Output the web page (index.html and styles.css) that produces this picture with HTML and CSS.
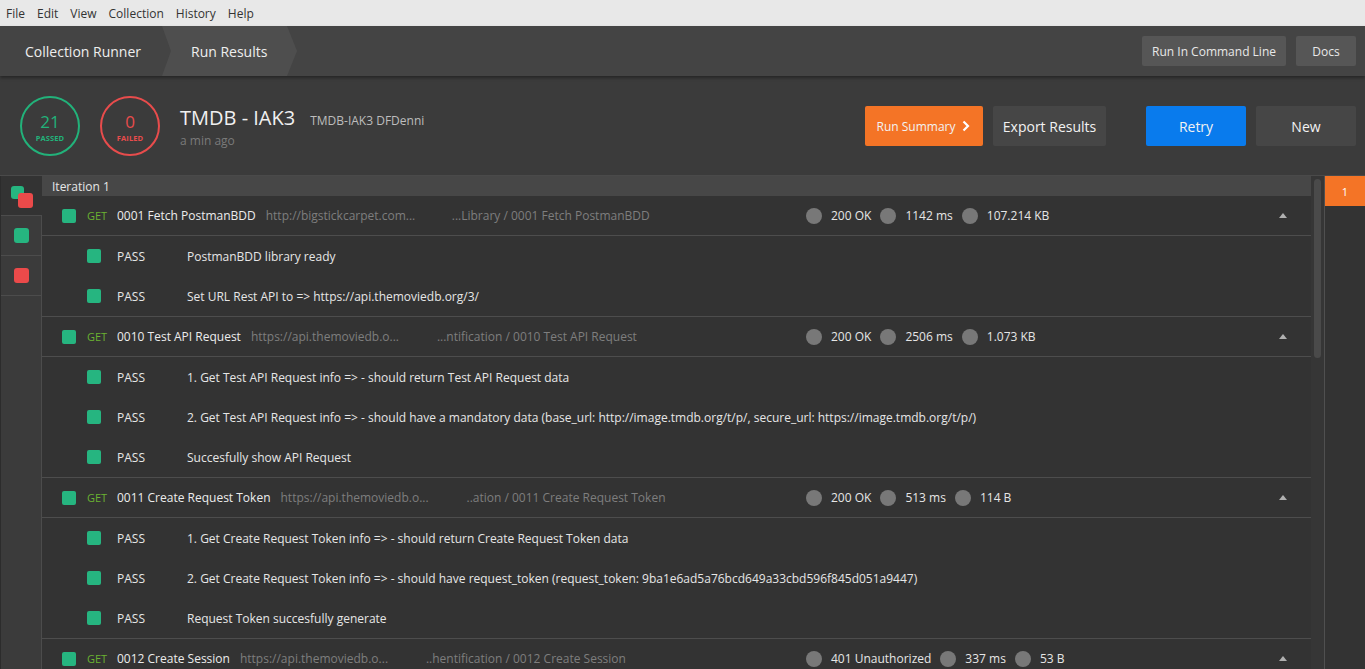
FILE: index.html
```html
<!DOCTYPE html>
<html>
<head>
<meta charset="utf-8">
<link rel="stylesheet" href="styles.css">
</head>
<body>
<div class="menubar">
  <span>File</span><span>Edit</span><span>View</span><span>Collection</span><span>History</span><span>Help</span>
</div>
<div class="tabbar">
  <div class="crumb crumb-first">Collection Runner</div>
  <div class="crumb crumb-active">Run Results</div>
  <div class="tab-actions">
    <button class="btn-dark">Run In Command Line</button>
    <button class="btn-dark btn-docs">Docs</button>
  </div>
</div>
<div class="header">
  <div class="ring ring-pass"><span class="ring-num">21</span><span class="ring-label">PASSED</span></div>
  <div class="ring ring-fail"><span class="ring-num">0</span><span class="ring-label">FAILED</span></div>
  <div class="title-block">
    <div class="title-line"><span class="title">TMDB - IAK3</span><span class="subtitle">TMDB-IAK3 DFDenni</span></div>
    <div class="ago">a min ago</div>
  </div>
  <div class="header-actions">
    <button class="btn btn-orange">Run Summary <svg width="10" height="12" viewBox="0 0 10 12"><path d="M2.5 1.5 L7 6 L2.5 10.5" fill="none" stroke="#fff" stroke-width="2.2"/></svg></button>
    <button class="btn btn-grey btn-export">Export Results</button>
    <button class="btn btn-blue">Retry</button>
    <button class="btn btn-grey btn-new">New</button>
  </div>
</div>
<div class="main">
  <div class="sidebar">
    <div class="stab stab-active"><span class="sq sq-g sq-back"></span><span class="sq sq-r sq-front"></span></div>
    <div class="stab"><span class="sq sq-g"></span></div>
    <div class="stab"><span class="sq sq-r"></span></div>
  </div>
  <div class="results">
    <div class="iter">Iteration 1</div>

    <div class="req">
      <div class="req-left"><span class="dot-sq"></span><span class="method">GET</span><span class="name">0001 Fetch PostmanBDD</span><span class="url">http://bigstickcarpet.com...</span><span class="path">...Library / 0001 Fetch PostmanBDD</span></div>
      <div class="stats"><span class="cdot"></span><span>200 OK</span><span class="cdot"></span><span>1142 ms</span><span class="cdot"></span><span>107.214 KB</span></div>
      <span class="caret"></span>
    </div>
    <div class="tests">
      <div class="test"><span class="dot-sq"></span><span class="pass">PASS</span><span>PostmanBDD library ready</span></div>
      <div class="test"><span class="dot-sq"></span><span class="pass">PASS</span><span>Set URL Rest API to =&gt; https://api.themoviedb.org/3/</span></div>
    </div>

    <div class="req">
      <div class="req-left"><span class="dot-sq"></span><span class="method">GET</span><span class="name">0010 Test API Request</span><span class="url">https://api.themoviedb.o...</span><span class="path">...ntification / 0010 Test API Request</span></div>
      <div class="stats"><span class="cdot"></span><span>200 OK</span><span class="cdot"></span><span>2506 ms</span><span class="cdot"></span><span>1.073 KB</span></div>
      <span class="caret"></span>
    </div>
    <div class="tests">
      <div class="test"><span class="dot-sq"></span><span class="pass">PASS</span><span>1. Get Test API Request info =&gt; - should return Test API Request data</span></div>
      <div class="test"><span class="dot-sq"></span><span class="pass">PASS</span><span>2. Get Test API Request info =&gt; - should have a mandatory data (base_url: http://image.tmdb.org/t/p/, secure_url: https://image.tmdb.org/t/p/)</span></div>
      <div class="test"><span class="dot-sq"></span><span class="pass">PASS</span><span>Succesfully show API Request</span></div>
    </div>

    <div class="req">
      <div class="req-left"><span class="dot-sq"></span><span class="method">GET</span><span class="name">0011 Create Request Token</span><span class="url">https://api.themoviedb.o...</span><span class="path">..ation / 0011 Create Request Token</span></div>
      <div class="stats"><span class="cdot"></span><span>200 OK</span><span class="cdot"></span><span>513 ms</span><span class="cdot"></span><span>114 B</span></div>
      <span class="caret"></span>
    </div>
    <div class="tests">
      <div class="test"><span class="dot-sq"></span><span class="pass">PASS</span><span>1. Get Create Request Token info =&gt; - should return Create Request Token data</span></div>
      <div class="test"><span class="dot-sq"></span><span class="pass">PASS</span><span>2. Get Create Request Token info =&gt; - should have request_token (request_token: 9ba1e6ad5a76bcd649a33cbd596f845d051a9447)</span></div>
      <div class="test"><span class="dot-sq"></span><span class="pass">PASS</span><span>Request Token succesfully generate</span></div>
    </div>

    <div class="req">
      <div class="req-left"><span class="dot-sq"></span><span class="method">GET</span><span class="name">0012 Create Session</span><span class="url">https://api.themoviedb.o...</span><span class="path">..hentification / 0012 Create Session</span></div>
      <div class="stats"><span class="cdot"></span><span>401 Unauthorized</span><span class="cdot"></span><span>337 ms</span><span class="cdot"></span><span>53 B</span></div>
      <span class="caret"></span>
    </div>
  </div>
  <div class="scroll"><div class="thumb"></div></div>
  <div class="iters">
    <div class="iter-num">1</div>
  </div>
</div>
</body>
</html>
```
FILE: styles.css
```css
html, body { margin: 0; padding: 0; }
body {
  width: 1365px;
  height: 669px;
  overflow: hidden;
  background: #333333;
  font-family: "Open Sans", "Noto Sans", sans-serif;
  color: #e6e6e6;
}
button { font-family: inherit; border: 0; cursor: pointer; }

.menubar {
  height: 26px;
  background: #e8e8e8;
  display: flex;
  align-items: center;
  padding-left: 6px;
  font-size: 12px;
  color: #333;
}
.menubar span { margin-right: 12px; }

.tabbar {
  height: 50px;
  background: #444444;
  display: flex;
  align-items: stretch;
  position: relative;
  box-shadow: 0 2px 3px rgba(0,0,0,0.35);
  z-index: 2;
}
.crumb {
  display: flex;
  align-items: center;
  font-size: 14px;
  color: #eeeeee;
}
.crumb-first { width: 137px; padding-left: 25px; }
.crumb-active {
  background: #4e4e4e;
  padding-left: 29px;
  width: 106px;
  clip-path: polygon(0 0, 125px 0, 135px 50%, 125px 100%, 0 100%, 9px 50%);
}
.tab-actions {
  margin-left: auto;
  display: flex;
  align-items: center;
  gap: 10px;
  padding-right: 9px;
}
.btn-dark {
  height: 30px;
  background: #565656;
  color: #e8e8e8;
  font-size: 12px;
  padding: 0 10px;
  border-radius: 2px;
}
.btn-docs { width: 60px; }

.header {
  height: 100px;
  background: #3b3b3b;
  display: flex;
  align-items: center;
  padding-left: 20px;
  box-sizing: border-box;
  border-bottom: 1px solid #4a4a4a;
}
.ring {
  width: 60px; height: 60px;
  box-sizing: border-box;
  border-radius: 50%;
  border: 2px solid;
  display: flex; flex-direction: column; align-items: center; justify-content: center;
  margin-right: 20px;
  margin-top: 1px;
}
.ring-pass { border-color: #22b27a; color: #22b27a; }
.ring-fail { border-color: #e84c4c; color: #e84c4c; }
.ring-num { font-size: 17px; line-height: 20px; margin-top: 2px; }
.ring-label { font-size: 7.5px; font-weight: 700; letter-spacing: 0.1px; margin-top: 1px; line-height: 10px; }
.title-block { margin-top: 1px; }
.title-line { display: flex; align-items: baseline; }
.title { font-size: 20px; color: #f0f0f0; }
.subtitle { font-size: 12px; color: #bdbdbd; margin-left: 15px; }
.ago { font-size: 12px; color: #7a7a7a; margin-top: 1px; }

.header-actions {
  margin-left: auto;
  display: flex;
  align-items: center;
  padding-right: 9px;
  margin-top: 1px;
}
.btn {
  height: 40px;
  border-radius: 2px;
  color: #f2f2f2;
  display: flex; align-items: center; justify-content: center;
}
.btn-orange {
  width: 118px;
  background: #f47426;
  font-size: 12px;
  gap: 6px;
  margin-right: 10px;
  padding-top: 1px;
}
.btn-grey { background: #464646; font-size: 14px; }
.btn-export { width: 113px; margin-right: 40px; }
.btn-blue { width: 100px; background: #097bed; font-size: 14px; margin-right: 10px; }
.btn-new { width: 100px; }

.main {
  display: flex;
  height: 493px;
}
.sidebar {
  width: 42px;
  background: #3b3b3b;
  border-right: 1px solid #4c4c4c;
  border-left: 1px solid #2c2c2c;
  box-sizing: border-box;
  flex: none;
}
.stab {
  height: 40px;
  border-bottom: 1px solid #4c4c4c;
  box-sizing: border-box;
  display: flex; align-items: center; justify-content: center;
  position: relative;
}
.stab-active { background: #333333; margin-right: -1px; }
.sq { width: 15px; height: 15px; border-radius: 3px; display: block; }
.sq-g { background: #26b580; }
.sq-r { background: #eb4a4a; }
.sq-back { position: absolute; left: 10px; top: 10px; width: 13px; height: 13px; }
.sq-front { position: absolute; left: 17px; top: 17px; }

.results {
  width: 1269px;
  flex: none;
  font-size: 12px;
}
.iter {
  height: 20px;
  box-sizing: border-box;
  background: #474747;
  line-height: 18px;
  padding-top: 2px;
  padding-left: 10px;
  color: #e6e6e6;
}
.req {
  height: 40px;
  display: flex;
  align-items: center;
  border-bottom: 1px solid #4d4d4d;
  box-sizing: border-box;
  padding-left: 20px;
  padding-right: 24px;
}
.req-left { width: 744px; display: flex; align-items: center; flex: none; white-space: nowrap; }
.dot-sq {
  width: 14px; height: 14px; border-radius: 2px;
  background: #26b580; flex: none;
}
.method { color: #6ab231; font-size: 11px; margin-left: 11px; width: 30px; }
.name { color: #ececec; margin-right: 10px; }
.url { color: #7e7e7e; width: 176px; margin-right: 10px; }
.path { color: #7e7e7e; }
.stats { display: flex; align-items: center; flex: 1; color: #e6e6e6; white-space: nowrap; }
.cdot { width: 16px; height: 16px; border-radius: 50%; background: #787878; margin-right: 9px; }
.stats span:not(.cdot) { margin-right: 9px; }
.caret {
  width: 0; height: 0;
  border-left: 4px solid transparent;
  border-right: 4px solid transparent;
  border-bottom: 5px solid #b0b0b0;
}
.tests { border-bottom: 1px solid #4d4d4d; }
.test {
  height: 40px;
  display: flex;
  align-items: center;
  padding-left: 45px;
  color: #e6e6e6;
  white-space: nowrap;
}
.pass { margin-left: 16px; width: 70px; }

.scroll {
  width: 14px;
  flex: none;
  background: #363636;
  border-right: 1px solid #505050;
  box-sizing: border-box;
  padding: 3px 3px 0 3px;
}
.thumb { height: 179px; background: #4a4a4a; border-radius: 4px; }
.iters { flex: 1; }
.iter-num {
  height: 30px;
  background: #f47426;
  color: #fff;
  font-size: 11px;
  display: flex; align-items: center; justify-content: center;
}
```
